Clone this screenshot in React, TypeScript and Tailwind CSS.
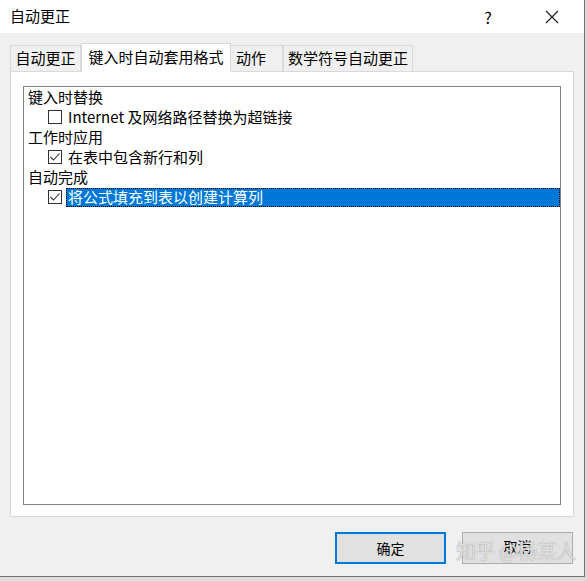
import React from "react";

const font = { fontFamily: '"Noto Sans CJK SC", "Noto Sans", sans-serif' };

const Check = ({ checked }: { checked?: boolean }) => (
  <span className="w-[14px] h-[14px] border border-[#333] bg-white flex items-center justify-center shrink-0">
    {checked && (
      <svg width="12" height="12" viewBox="0 0 12 12">
        <path d="M1.5 6 L4.5 9 L10.5 2.5" fill="none" stroke="#333" strokeWidth="1.1" />
      </svg>
    )}
  </span>
);

const Row = ({ text, checked, selected }: { text: string; checked?: boolean; selected?: boolean }) => (
  <div className="flex items-center h-[20px] pl-[20px]">
    <Check checked={checked} />
    <span
      className={
        selected
          ? "ml-[4px] pl-[2px] flex-1 h-[19px] leading-[17px] bg-[#0078d7] text-white outline outline-1 outline-dotted outline-black -outline-offset-1"
          : "ml-[6px] leading-[20px]"
      }
    >
      {text}
    </span>
  </div>
);

const App = () => {
  return (
    <div className="w-[587px] h-[581px] bg-[#dcdcdc] text-[15px] text-black" style={font}>
      <div className="w-[585px] h-[577px] flex flex-col border-r border-b border-[#707070] bg-[#f0f0f0]">
        <div className="h-[33px] bg-white flex items-center pl-[10px] shrink-0">
          <span className="flex-1">自动更正</span>
          <span className="w-[20px] text-center mr-[46px] text-[16px]">?</span>
          <svg width="16" height="16" viewBox="0 0 16 16" className="mr-[24px]">
            <path d="M2 2 L14 14 M14 2 L2 14" stroke="#222" strokeWidth="1.2" />
          </svg>
        </div>
        <div className="flex-1 px-[10px]">
          <div className="flex items-end h-[38px] pt-[10px] relative z-10">
            <div className="h-[26px] w-[71px] border border-b-0 border-[#d9d9d9] bg-[#f0f0f0] flex items-center justify-center">
              自动更正
            </div>
            <div className="h-[29px] w-[150px] border border-b-0 border-[#d9d9d9] bg-white flex items-center justify-center -mb-px pb-px">
              键入时自动套用格式
            </div>
            <div className="h-[26px] w-[52px] border border-b-0 border-l-0 border-[#d9d9d9] bg-[#f0f0f0] flex items-center pl-[5px]">
              动作
            </div>
            <div className="h-[26px] w-[130px] border border-b-0 border-[#d9d9d9] bg-[#f0f0f0] flex items-center justify-center">
              数学符号自动更正
            </div>
          </div>
          <div className="h-[446px] w-[564px] bg-white border border-[#d9d9d9] pl-[12px] pt-[14px]">
            <div className="w-[538px] h-[419px] border border-[#828282] pl-[4px] pt-0">
              <div className="leading-[20px] h-[20px]">键入时替换</div>
              <Row text="Internet 及网络路径替换为超链接" />
              <div className="leading-[20px] h-[20px]">工作时应用</div>
              <Row text="在表中包含新行和列" checked />
              <div className="leading-[20px] h-[20px]">自动完成</div>
              <Row text="将公式填充到表以创建计算列" checked selected />
            </div>
          </div>
          <div className="flex justify-end gap-[16px] mt-[15px] pr-[1px] relative">
            <button className="w-[111px] h-[32px] border-2 border-[#0078d7] bg-[#e1e1e1] text-[14px]">
              确定
            </button>
            <button className="w-[111px] h-[32px] border border-[#adadad] bg-[#e1e1e1] text-[14px] pb-[4px]">
              取消
            </button>
            <span
              className="absolute right-[-2px] top-[7px] text-[20px] leading-[24px] text-white/75 tracking-[-0.5px]"
              style={{ textShadow: "0 0 1px #777" }}
            >
              知乎 @杨某人
            </span>
          </div>
        </div>
      </div>
    </div>
  );
};

export default App;
